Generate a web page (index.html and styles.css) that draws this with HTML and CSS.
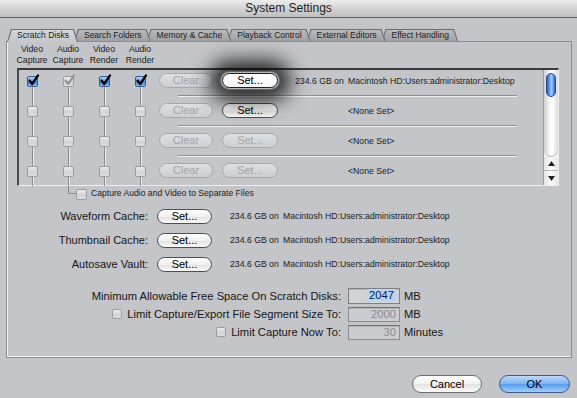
FILE: index.html
```html
<!DOCTYPE html>
<html>
<head>
<meta charset="utf-8">
<link rel="stylesheet" href="styles.css">
</head>
<body>
<div class="titlebar">System Settings</div>
<div class="tabs">
  <div class="tab active"><span>Scratch Disks</span></div>
  <div class="tab"><span>Search Folders</span></div>
  <div class="tab"><span>Memory &amp; Cache</span></div>
  <div class="tab"><span>Playback Control</span></div>
  <div class="tab"><span>External Editors</span></div>
  <div class="tab"><span>Effect Handling</span></div>
</div>
<div class="panel">
  <div class="colheads">
    <div>Video<br>Capture</div>
    <div>Audio<br>Capture</div>
    <div>Video<br>Render</div>
    <div>Audio<br>Render</div>
  </div>
  <div class="list">
    <div class="rows">
      <div class="row first">
        <div class="checks">
          <div class="cell"><i class="vl t"></i><span class="cb on"><svg class="ck" viewBox="0 0 13 13" width="13" height="13"><path d="M2.6 6.6 L5.2 10 L11 1.4" fill="none" stroke="#000" stroke-width="2.3" stroke-linecap="round" stroke-linejoin="round"/></svg></span><i class="vl b"></i></div>
          <div class="cell"><i class="vl t"></i><span class="cb"><svg class="ck" viewBox="0 0 13 13" width="13" height="13"><path d="M2.6 6.6 L5.2 10 L11 1.4" fill="none" stroke="#8d8e91" stroke-width="2" stroke-linecap="round" stroke-linejoin="round"/></svg></span><i class="vl b"></i></div>
          <div class="cell"><i class="vl t"></i><span class="cb on"><svg class="ck" viewBox="0 0 13 13" width="13" height="13"><path d="M2.6 6.6 L5.2 10 L11 1.4" fill="none" stroke="#000" stroke-width="2.3" stroke-linecap="round" stroke-linejoin="round"/></svg></span><i class="vl b"></i></div>
          <div class="cell"><i class="vl t"></i><span class="cb on"><svg class="ck" viewBox="0 0 13 13" width="13" height="13"><path d="M2.6 6.6 L5.2 10 L11 1.4" fill="none" stroke="#000" stroke-width="2.3" stroke-linecap="round" stroke-linejoin="round"/></svg></span><i class="vl b"></i></div>
        </div>
        <div class="main">
          <div class="line">
            <div class="btn clear dis">Clear</div>
            <div class="btn set en glow">Set...</div>
            <div class="size">234.6 GB on</div>
            <div class="path">Macintosh HD:Users:administrator:Desktop</div>
          </div>
          <div class="sep"></div>
        </div>
      </div>
      <div class="row">
        <div class="checks">
          <div class="cell"><i class="vl t"></i><span class="cb"></span><i class="vl b"></i></div>
          <div class="cell"><i class="vl t"></i><span class="cb"></span><i class="vl b"></i></div>
          <div class="cell"><i class="vl t"></i><span class="cb"></span><i class="vl b"></i></div>
          <div class="cell"><i class="vl t"></i><span class="cb"></span><i class="vl b"></i></div>
        </div>
        <div class="main">
          <div class="line">
            <div class="btn clear dis">Clear</div>
            <div class="btn set en">Set...</div>
            <div class="size"></div>
            <div class="path">&lt;None Set&gt;</div>
          </div>
          <div class="sep"></div>
        </div>
      </div>
      <div class="row">
        <div class="checks">
          <div class="cell"><i class="vl t"></i><span class="cb"></span><i class="vl b"></i></div>
          <div class="cell"><i class="vl t"></i><span class="cb"></span><i class="vl b"></i></div>
          <div class="cell"><i class="vl t"></i><span class="cb"></span><i class="vl b"></i></div>
          <div class="cell"><i class="vl t"></i><span class="cb"></span><i class="vl b"></i></div>
        </div>
        <div class="main">
          <div class="line">
            <div class="btn clear dis">Clear</div>
            <div class="btn set dis">Set...</div>
            <div class="size"></div>
            <div class="path">&lt;None Set&gt;</div>
          </div>
          <div class="sep"></div>
        </div>
      </div>
      <div class="row">
        <div class="checks">
          <div class="cell"><i class="vl t"></i><span class="cb"></span><i class="vl b"></i></div>
          <div class="cell"><i class="vl t"></i><span class="cb"></span><i class="vl b"></i></div>
          <div class="cell"><i class="vl t"></i><span class="cb"></span><i class="vl b"></i></div>
          <div class="cell"><i class="vl t"></i><span class="cb"></span><i class="vl b"></i></div>
        </div>
        <div class="main">
          <div class="line">
            <div class="btn clear dis">Clear</div>
            <div class="btn set dis">Set...</div>
            <div class="size"></div>
            <div class="path">&lt;None Set&gt;</div>
          </div>
        </div>
      </div>
    </div>
    <div class="sb">
      <div class="track"><div class="thumb"></div></div>
      <div class="arrow up"><svg viewBox="0 0 7 5" width="7" height="5"><path d="M3.5 0 L7 5 L0 5 Z" fill="#222"/></svg></div>
      <div class="arrow down"><svg viewBox="0 0 7 5" width="7" height="5"><path d="M0 0 L7 0 L3.5 5 Z" fill="#222"/></svg></div>
    </div>
  </div>
  <div class="caprow">
    <i class="bracket"></i>
    <span class="cb small"></span>
    <span class="caplabel">Capture Audio and Video to Separate Files</span>
  </div>
  <div class="caches">
    <div class="clabel">Waveform Cache:</div>
    <div><div class="btn wide en">Set...</div></div>
    <div class="size2">234.6 GB on</div>
    <div class="path">Macintosh HD:Users:administrator:Desktop</div>

    <div class="clabel">Thumbnail Cache:</div>
    <div><div class="btn wide en">Set...</div></div>
    <div class="size2">234.6 GB on</div>
    <div class="path">Macintosh HD:Users:administrator:Desktop</div>

    <div class="clabel">Autosave Vault:</div>
    <div><div class="btn wide en">Set...</div></div>
    <div class="size2">234.6 GB on</div>
    <div class="path">Macintosh HD:Users:administrator:Desktop</div>
  </div>
  <div class="limits">
    <div class="llabel">Minimum Allowable Free Space On Scratch Disks:</div>
    <div class="field active"><span class="sel">2047</span></div>
    <div class="unit">MB</div>

    <div class="llabel"><span class="cb lim"></span>Limit Capture/Export File Segment Size To:</div>
    <div class="field">2000</div>
    <div class="unit">MB</div>

    <div class="llabel"><span class="cb lim"></span>Limit Capture Now To:</div>
    <div class="field">30</div>
    <div class="unit">Minutes</div>
  </div>
</div>
<div class="footer">
  <div class="pbtn cancel">Cancel</div>
  <div class="pbtn ok">OK</div>
</div>
</body>
</html>
```

FILE: styles.css
```css
* { box-sizing: border-box; margin: 0; padding: 0; }
html, body { width: 577px; height: 398px; overflow: hidden; }
body {
  background: #c4c5c9;
  font-family: "Liberation Sans", Arial, sans-serif;
  color: #151515;
}
i { display: block; font-style: normal; }

.titlebar {
  height: 18px;
  border-bottom: 1px solid #5c5c5c;
  background: linear-gradient(#ededed, #d3d3d3 50%, #bfbfbf);
  text-align: center;
  font-size: 12px;
  line-height: 17px;
  color: #1e1e1e;
}

.tabs {
  display: flex;
  align-items: flex-start;
  height: 12px;
  margin: 11px 0 0 7px;
  position: relative;
  z-index: 2;
}
.tab {
  position: relative;
  height: 12px;
  margin-left: -4px;
  padding: 1px 1px 0;
  background: #6e6f72;
  clip-path: polygon(4px 0, calc(100% - 4px) 0, 100% 100%, 0 100%);
}
.tab:first-child { margin-left: 0; }
.tab:nth-child(1) { z-index: 6; }
.tab:nth-child(2) { z-index: 5; }
.tab:nth-child(3) { z-index: 4; }
.tab:nth-child(4) { z-index: 3; }
.tab:nth-child(5) { z-index: 2; }
.tab:nth-child(6) { z-index: 1; }
.tab span {
  display: block;
  height: 100%;
  padding: 0 8px 0 9px;
  font-size: 8.5px;
  line-height: 11px;
  white-space: nowrap;
  color: #1c1c1c;
  background: linear-gradient(#b9babd, #a0a1a4);
  clip-path: polygon(4px 0, calc(100% - 4px) 0, 100% 100%, 0 100%);
}
.tab.active { height: 13px; }
.tab.active span { background: linear-gradient(#d6d7da, #c6c7cb); }

.panel {
  margin-left: 6px;
  width: 566px;
  height: 317px;
  border: 1px solid #8b8c90;
  box-shadow: inset 1px 0 #f2f2f2, inset 0 -1px #f2f2f2;
  padding: 2px 0 0 10px;
}

.colheads {
  display: flex;
  margin-left: -3px;
  font-size: 8.7px;
  line-height: 11px;
  text-align: center;
  color: #1a1a1a;
}
.colheads div { width: 36px; }

.list {
  display: flex;
  margin-top: 2px;
  width: 542px;
  height: 118px;
  border-style: solid;
  border-width: 2px 1px 1px 2px;
  border-color: #38393b #eeeeee #eeeeee #4a4b4d;
}
.rows { flex: 1; margin-top: -4px; }
.row { display: flex; height: 30px; }
.checks { display: flex; gap: 25px; padding-left: 8px; }
.cell { width: 11px; display: flex; flex-direction: column; }
.vl { width: 1px; margin-left: 5px; background: #8b8b8e; box-shadow: 1px 0 #ececec; }
.vl.t { height: 10px; }
.vl.b { flex: 1; }
.first .vl.t { visibility: hidden; }

.cb {
  display: block;
  position: relative;
  width: 11px;
  height: 11px;
  border: 1px solid #9c9da0;
  border-radius: 2px;
  background: linear-gradient(#ebebec, #d2d3d5 55%, #dcdde0);
}
.cb.on {
  border-color: #3b5b91;
  background: linear-gradient(#b7d3f6, #5e97e2 48%, #3d7bd6 52%, #8cbcf2);
}
.ck { position: absolute; left: -1px; top: -3px; }

.main { margin-left: 13px; display: flex; flex-direction: column; }
.line { height: 29px; display: flex; align-items: center; }
.sep {
  margin-left: 19px;
  width: 339px;
  height: 1px;
  background: #8f9093;
  box-shadow: 0 1px #f0f0f0;
}

.btn {
  height: 15px;
  border-radius: 8px;
  font-size: 11px;
  line-height: 13px;
  text-align: center;
}
.btn.clear { width: 54px; }
.btn.set { width: 56px; margin-left: 9px; }
.btn.wide { width: 55px; }
.btn.dis {
  border: 1px solid #a8a9ac;
  background: linear-gradient(#dedfe2, #cdced1);
  color: #a3a4a7;
}
.btn.en {
  border: 1px solid #4d4d4f;
  background: linear-gradient(#ffffff, #efefef 50%, #e2e2e2 52%, #f9f9f9);
  color: #000;
}
.btn.glow {
  position: relative;
  z-index: 3;
  border-color: #1e1e1e;
  background: linear-gradient(#ffffff, #f6f6f6);
  box-shadow: 0 0 2px 1px #e8e8e8, 0 0 20px 12px rgba(0, 0, 0, 0.85);
}

.size { margin-left: 17px; width: 53px; font-size: 8.7px; white-space: nowrap; color: #1a1a1a; }
.path { font-size: 8.7px; white-space: nowrap; color: #1a1a1a; }

.sb {
  width: 15px;
  border-left: 1px solid #9b9b9e;
  display: flex;
  flex-direction: column;
  background: #f3f3f3;
}
.track {
  height: 87px;
  padding: 3px 0 0 2px;
  border-radius: 0 0 7px 7px;
  background: linear-gradient(to right, #cfcfd1, #f7f7f7 40%, #ffffff 60%, #dadadc);
  border-bottom: 1px solid #b5b5b8;
}
.thumb {
  width: 10px;
  height: 24px;
  border-radius: 5px;
  border: 1px solid #23488b;
  background: linear-gradient(to right, #2c5fb8, #5f9ae9 30%, #a6ccf8 55%, #5f9ae9 80%, #2a5cb3);
}
.arrow {
  height: 14px;
  display: flex;
  align-items: center;
  justify-content: center;
  background: linear-gradient(to right, #e4e4e6, #fbfbfb 50%, #e6e6e8);
}
.arrow.up { border-bottom: 1px solid #b7b7ba; }
.arrow.down { flex: 1; }

.caprow { display: flex; align-items: flex-start; height: 14px; margin-left: 51px; }
.bracket {
  width: 8px;
  height: 8px;
  border-left: 1px solid #8b8b8e;
  border-bottom: 1px solid #8b8b8e;
}
.cb.small { margin-top: 3px; width: 11px; height: 11px; }
.caplabel { margin-left: 4px; font-size: 8.6px; line-height: 15px; white-space: nowrap; color: #1a1a1a; }

.caches {
  display: grid;
  grid-template-columns: 140px 73px 53px auto;
  grid-auto-rows: 24px;
  align-items: center;
  margin-top: 4px;
}
.clabel { text-align: right; padding-right: 9px; font-size: 11px; white-space: nowrap; }
.size2 { font-size: 8.7px; white-space: nowrap; color: #1a1a1a; }

.limits {
  display: grid;
  grid-template-columns: 331px 56px auto;
  grid-auto-rows: 18px;
  align-items: center;
  margin-top: 11px;
}
.llabel {
  display: flex;
  align-items: center;
  justify-content: flex-end;
  padding-right: 7px;
  font-size: 11.2px;
  white-space: nowrap;
}
.cb.lim { width: 10px; height: 10px; margin-right: 5px; }
.field {
  width: 52px;
  height: 15px;
  border: 1px solid #8d8e91;
  border-top-color: #6f7073;
  background: #cbccd0;
  box-shadow: inset 0 1px #b4b5b8;
  font-size: 11.2px;
  line-height: 13px;
  text-align: right;
  padding-right: 3px;
  color: #8a8b8e;
}
.field.active {
  height: 16px;
  border-color: #7f8084;
  background: #d2d3d6;
  color: #0b1a40;
}
.sel { background: #b5d2f7; padding: 0 2px; }
.unit { font-size: 11.2px; white-space: nowrap; }

.footer {
  display: flex;
  justify-content: flex-end;
  gap: 17px;
  padding-right: 7px;
  margin-top: 17px;
}
.pbtn {
  height: 18px;
  border-radius: 9px;
  font-size: 11px;
  line-height: 16px;
  text-align: center;
  color: #000;
}
.pbtn.cancel {
  width: 70px;
  border: 1px solid #6f6f72;
  background: linear-gradient(#ffffff, #f1f1f1 50%, #e3e3e3 52%, #fbfbfb);
}
.pbtn.ok {
  width: 71px;
  border: 1px solid #3f5a8c;
  background: linear-gradient(#c0dafa, #7eb3f2 48%, #5a9cec 52%, #9fd0fb);
}
```
